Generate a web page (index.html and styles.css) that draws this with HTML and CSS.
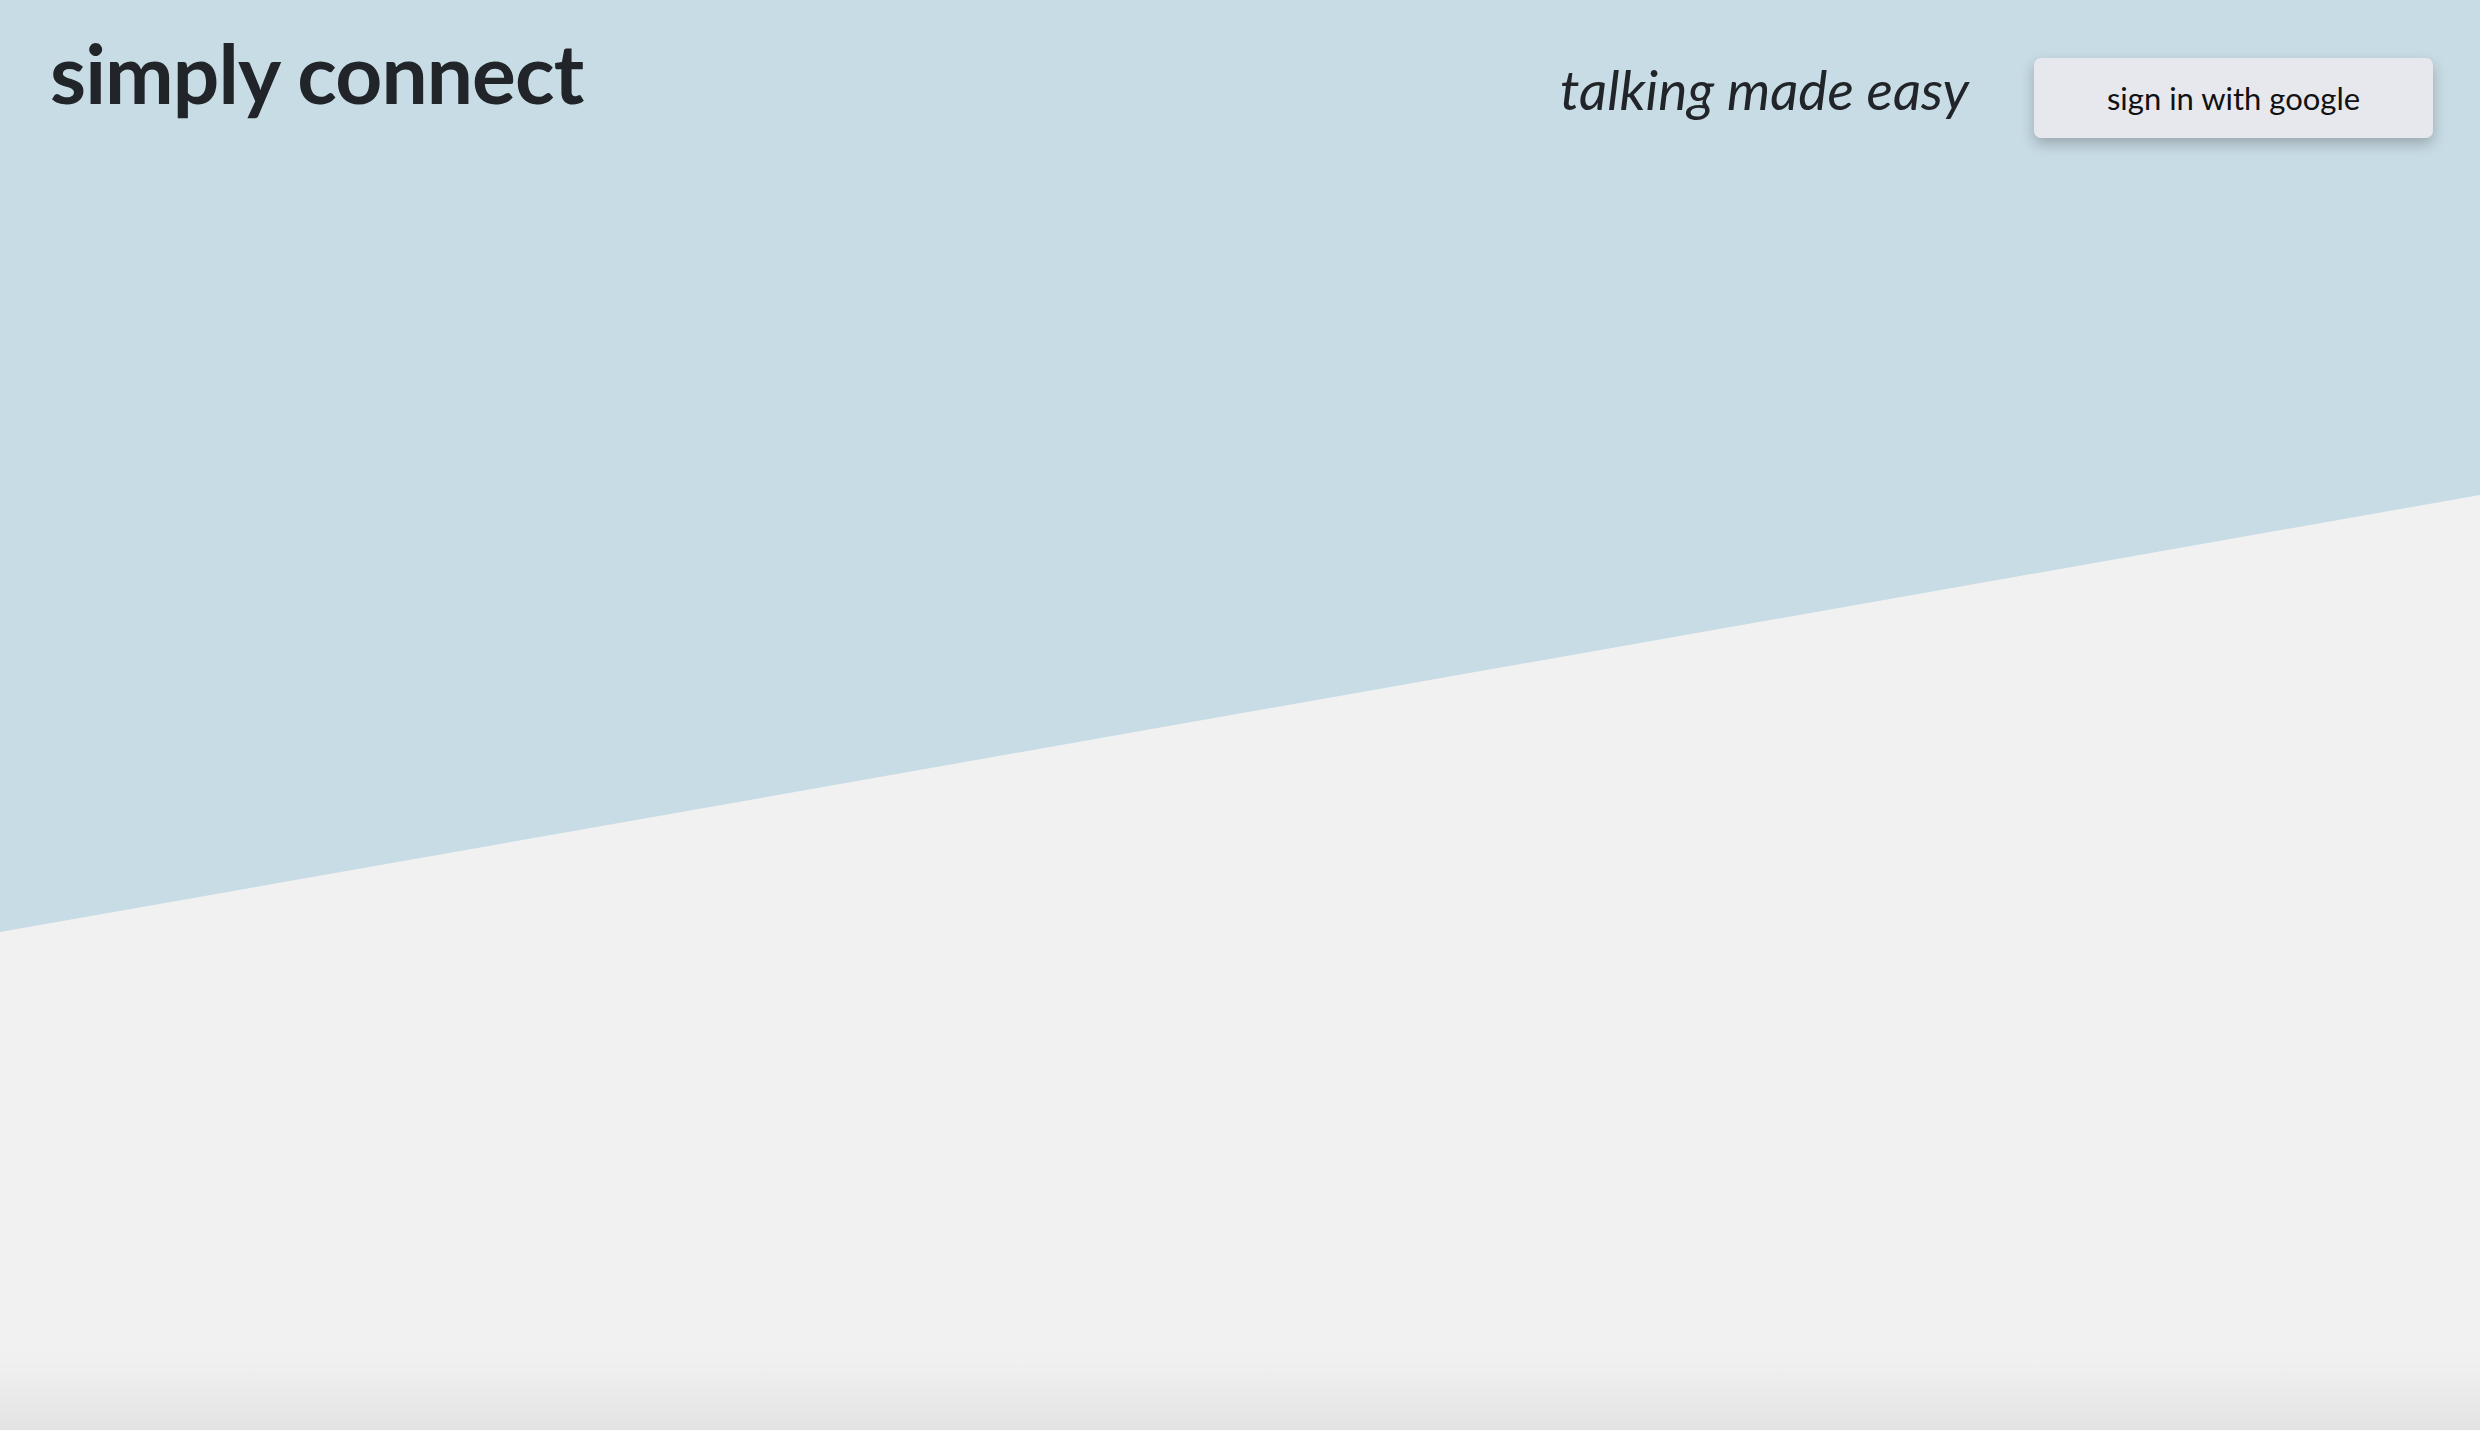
FILE: index.html
```html
<!DOCTYPE html>
<html lang="en">
<head>
<meta charset="utf-8">
<title>simply connect</title>
<link rel="stylesheet" href="styles.css">
</head>
<body>
<div class="page">
  <div class="backdrop"></div>
  <header class="topbar">
    <h1 class="brand">simply connect</h1>
    <div class="actions">
      <span class="tagline">talking made easy</span>
      <button class="signin">sign in with google</button>
    </div>
  </header>
  <div class="floor"></div>
</div>
</body>
</html>
```
FILE: styles.css
```css
html, body {
  margin: 0;
  padding: 0;
  height: 100%;
}
body {
  background: #f1f1f1;
  font-family: Lato, "Open Sans", sans-serif;
  color: #212529;
}
.page {
  position: relative;
  height: 100vh;
  overflow: hidden;
  display: flex;
  flex-direction: column;
}
.backdrop {
  position: absolute;
  inset: 0;
  background: #c8dce5;
  clip-path: polygon(0 0, 100% 0, 100% 495px, 0 932px);
}
.topbar {
  position: relative;
  display: flex;
  justify-content: space-between;
  align-items: flex-start;
  padding: 0 47px 0 50px;
}
.brand {
  margin: 23px 0 0 0;
  font-weight: 700;
  font-size: 82px;
  line-height: 1.2;
  letter-spacing: -0.9px;
}
.actions {
  display: flex;
  align-items: baseline;
  gap: 65px;
  margin-top: 58px;
}
.tagline {
  font-style: italic;
  font-size: 55px;
  line-height: 1;
}
.signin {
  width: 399px;
  height: 80px;
  border: none;
  border-radius: 7px;
  background: #e6e8ed;
  color: #111;
  font-family: Lato, sans-serif;
  font-size: 31px;
  box-shadow: 0 6px 14px rgba(0, 0, 0, 0.24);
}
.floor {
  margin-top: auto;
  height: 80px;
  position: relative;
  background: linear-gradient(to bottom, rgba(0,0,0,0) 0%, rgba(0,0,0,0.012) 30%, rgba(0,0,0,0.06) 100%);
}
```
